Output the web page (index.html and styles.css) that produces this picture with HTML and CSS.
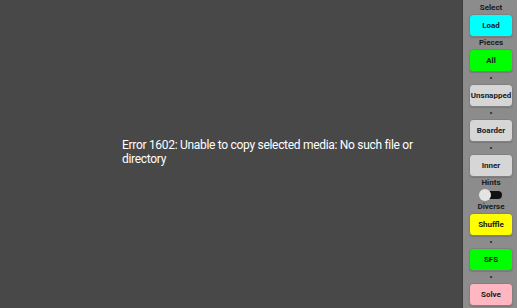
FILE: index.html
```html
<!DOCTYPE html>
<html lang="en">
<head>
    <meta charset="UTF-8">
    <meta name="viewport" content="width=device-width, initial-scale=1.0">
    <title>Puzzle</title>
    <link rel="stylesheet" href="styles.css">
</head>
<body>

<div class="screen">
    <div class="board">
        <div class="message">Error 1602: Unable to copy selected media: No such file or directory</div>
    </div>

    <div class="panel">
        <div class="label">Select</div>
        <button class="btn cyan">Load</button>
        <div class="label">Pieces</div>
        <button class="btn green">All</button>
        <div class="sep">•</div>
        <button class="btn grey">Unsnapped</button>
        <div class="sep">•</div>
        <button class="btn grey">Boarder</button>
        <div class="sep">•</div>
        <button class="btn grey">Inner</button>
        <div class="label">Hints</div>
        <div class="toggle-row">
            <div class="toggle"><span class="knob"></span></div>
        </div>
        <div class="label">Diverse</div>
        <button class="btn yellow">Shuffle</button>
        <div class="sep">•</div>
        <button class="btn green">SFS</button>
        <div class="sep">•</div>
        <button class="btn pink">Solve</button>
    </div>
</div>

</body>
</html>
```

FILE: styles.css
```css
html, body {
    margin: 0;
    padding: 0;
    height: 100%;
}

body {
    font-family: Roboto, "Noto Sans", sans-serif;
    background-color: #484848;
}

.screen {
    display: flex;
    height: 308px;
    overflow: hidden;
}

.board {
    flex: 1;
    display: flex;
    align-items: center;
    background-color: #484848;
    border-right: 1px solid #3c3c3c;
}

.message {
    width: 300px;
    margin-left: 122px;
    margin-top: -4px;
    color: #fff;
    font-size: 12px;
    letter-spacing: -0.3px;
    line-height: 14px;
}

.panel {
    width: 54px;
    background-color: #8c8c8c;
    display: flex;
    flex-direction: column;
    align-items: center;
    padding: 2px 0 0 2px;
    box-sizing: border-box;
}

.label {
    height: 12px;
    line-height: 12px;
    font-size: 8px;
    font-weight: bold;
    color: #1a1a1a;
}

.sep {
    height: 12px;
    line-height: 12px;
    font-size: 9px;
    color: #1a1a1a;
}

.btn {
    width: 44px;
    height: 23px;
    padding: 0;
    border: 1px solid #808080;
    border-radius: 4px;
    font-family: Roboto, "Noto Sans", sans-serif;
    font-size: 8px;
    font-weight: bold;
    color: #1a1a1a;
    box-shadow: 0 1px 1px rgba(0, 0, 0, 0.15);
}

.cyan { background-color: #00ffff; }
.green { background-color: #00ff00; }
.grey { background-color: #d6d6d6; }
.yellow { background-color: #ffff00; }
.pink { background-color: #ffb6c1; }

.toggle-row {
    height: 12px;
    display: flex;
    align-items: center;
}

.toggle {
    position: relative;
    width: 20px;
    height: 8px;
    margin-left: 2px;
    background-color: #111;
    border-radius: 4px;
}

.knob {
    position: absolute;
    left: -3px;
    top: -2px;
    width: 12px;
    height: 12px;
    border-radius: 50%;
    background-color: #e4e4e4;
}
```
